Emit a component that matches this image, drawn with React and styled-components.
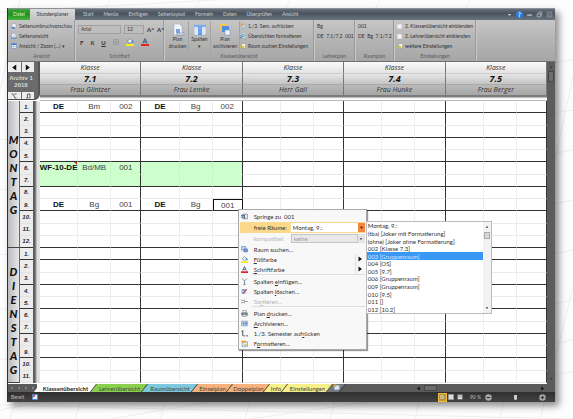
import React from 'react';
import styled, { createGlobalStyle, css } from 'styled-components';

const GlobalStyle = createGlobalStyle`
  * {
    box-sizing: border-box;
  }

  body {
    margin: 0;
    background: #fdfdfd;
    font-family: Lato, 'Open Sans', sans-serif;
    font-size: 5px;
    color: #333;
  }

  button, select, input {
    font: inherit;
    color: inherit;
    margin: 0;
    padding: 0;
    border: 0;
    background: none;
  }
`;

const Page = styled.div`
  position: relative;
  display: flex;
  min-height: 100vh;
  padding: 8px 18px 17px 7px;
`;

const Backdrop = styled.svg`
  position: absolute;
  inset: 0;
  width: 100%;
  height: 100%;
`;

const Window = styled.div`
  position: relative;
  flex: 1;
  min-width: 0;
  display: flex;
  flex-direction: column;
  background: #fff;
  border-left: 1px solid #333;
  box-shadow: 4px 4px 7px rgba(0, 0, 0, 0.45);
`;

const TabBar = styled.nav`
  display: flex;
  height: 12px;
  flex-shrink: 0;
  border-top: 1px solid #8b9299;
  background: linear-gradient(#68717b, #4b555f 40%, #69737e);
  color: #c9ced3;
`;

const RibbonTab = styled.button`
  padding: 0 5px;
  line-height: 11px;
  white-space: nowrap;

  ${({ $kind }) =>
    $kind === 'file' &&
    css`
      width: 22px;
      background: linear-gradient(#3da53b, #219022 50%, #45b53c);
      color: #d9f5d3;
    `}

  ${({ $kind }) =>
    $kind === 'active' &&
    css`
      width: 45px;
      margin-right: 3px;
      padding: 0;
      background: linear-gradient(#dadada, #c3c3c3);
      color: #333;
    `}
`;

const WindowButtons = styled.div`
  display: flex;
  align-items: center;
  gap: 3px;
  margin-left: auto;
  padding-right: 2px;
`;

const WindowButton = styled.button`
  display: flex;
  width: 7px;
  height: 7px;
`;

const Ribbon = styled.div`
  display: flex;
  flex-shrink: 0;
  height: 42px;
  background: linear-gradient(#c6c6c6, #b4b4b4 50%, #a6a6a6);
  border-bottom: 1px solid #707070;
  white-space: nowrap;
`;

const Group = styled.section`
  display: flex;
  flex-direction: column;
  width: ${({ $width }) => $width}px;
  flex-shrink: 0;
  padding: 1px 2px 0 3px;
  border-right: 1px solid #999;
  box-shadow: 1px 0 #c8c8c8;
`;

const GroupBody = styled.div`
  display: flex;
  flex: 1;
`;

const GroupTitle = styled.div`
  height: 9px;
  line-height: 8px;
  text-align: center;
  color: #5a5a5a;
`;

const Stack = styled.div`
  display: flex;
  flex-direction: column;
`;

const Command = styled.button`
  display: flex;
  align-items: center;
  gap: 2px;
  height: 10px;
  white-space: nowrap;
`;

const BigCommand = styled.button`
  display: flex;
  flex-direction: column;
  align-items: center;
  width: ${({ $width }) => $width}px;
  padding-top: 3px;
  border-right: 1px solid #a3a3a3;
  line-height: 7px;
`;

const CheckLabel = styled.label`
  display: flex;
  align-items: center;
  gap: 3px;
  height: 10px;
`;

const CheckBox = styled.input`
  appearance: none;
  width: 5px;
  height: 5px;
  background: #f4f4f4;
  border: 1px solid #ddd;
`;

const FontArea = styled.div`
  flex: 1;
`;

const FontRow = styled.div`
  display: flex;
  align-items: center;
  gap: ${({ $gap }) => $gap}px;
  height: 14px;
  padding-top: ${({ $top }) => $top || 0}px;
  padding-left: ${({ $left }) => $left || 0}px;
`;

const FontSelect = styled.select`
  appearance: none;
  width: ${({ $width }) => $width}px;
  height: 9px;
  padding: 0 2px;
  border: 1px solid #a0a0a0;
  background: #bdbdbd;
  line-height: 7px;
`;

const FormatButton = styled.button`
  display: flex;
  align-items: center;
  font-size: 6px;
  font-weight: 700;
  font-style: ${({ $italic }) => ($italic ? 'italic' : 'normal')};
  text-decoration: ${({ $underline }) => ($underline ? 'underline' : 'none')};
`;

const Workspace = styled.main`
  display: flex;
  flex: 1;
`;

const Schedule = styled.table`
  flex: 1;
  display: grid;
  grid-template-columns: 12px 13px 7px repeat(5, 38fr 33fr 30fr);
  grid-template-rows: 11px 11px 11px 6px repeat(23, minmax(12px, 1fr));
  padding-bottom: 1px;
  font-family: 'Liberation Sans', Arial, sans-serif;
  font-size: 8px;

  thead, tbody, tr {
    display: contents;
  }

  th, td {
    padding: 0;
    min-width: 0;
  }
`;

const Corner = styled.th`
  grid-column: 1 / 4;
  grid-row: 1 / 5;
  margin-bottom: 1px;
  padding-right: 4px !important;
  background: #6b6b6b;
  border-right: 2px solid #565656;
  border-bottom: 1px solid #4a4a4a;
  border-bottom-right-radius: 6px;
  font-family: 'Liberation Sans', Arial, sans-serif;
  font-size: 6px;
  line-height: 7px;
  white-space: nowrap;
  color: #d5d5d5;
  display: flex;
  flex-direction: column;
  justify-content: space-between;
`;

const NavRow = styled.div`
  display: flex;
  gap: 1px;
`;

const NavButton = styled.button`
  flex: 1;
  display: flex;
  align-items: center;
  justify-content: center;
  height: ${({ $small }) => ($small ? 7 : 10)}px;
  background: #ededed;
`;

const HeadCell = styled.th`
  grid-column: span 3;
  border-right: 1px solid #777;
  font-family: 'Open Sans', sans-serif;
  font-style: italic;
  font-size: 7px;
  font-weight: 400;
  line-height: 11px;
  color: #333;
  background: linear-gradient(#fafafa, #e3e3e3);

  ${({ $kind }) =>
    $kind === 'name' &&
    css`
      font-size: 9px;
      font-weight: 700;
      color: #111;
      border-top: 1px solid #ccc;
      line-height: 10px;
      background: linear-gradient(#e6e6e6, #c4c4c4);
    `}

  ${({ $kind }) =>
    $kind === 'teacher' &&
    css`
      border-top: 1px solid #aaa;
      line-height: 10px;
      background: linear-gradient(#bababa, #a6a6a6);
    `}
`;

const HeadEdge = styled.td`
  grid-column: 4 / -1;
  background: linear-gradient(#7c7c7c 40%, #dcdcdc 55%, #fff 75%);
  border-bottom: 1px solid #bbb;
`;

const DayCell = styled.th`
  grid-column: 1;
  grid-row: span ${({ $rows }) => $rows};
  display: flex;
  flex-direction: column;
  align-items: center;
  justify-content: flex-start;
  padding-top: ${({ $top }) => $top}px !important;
  background: linear-gradient(90deg, #b9bcc0, #e6e6e6);
  border-right: 1px solid #666;
  border-bottom: 1px solid #444;
  font-family: Lato, sans-serif;
  font-size: 11px;
  font-weight: 900;
  font-style: italic;
  color: #111;
`;

const DayLetter = styled.span`
  height: 14px;
  line-height: 14px;
`;

const HourCell = styled.th`
  grid-column: 2;
  display: flex;
  align-items: center;
  justify-content: center;
  background: #ececec;
  border-bottom: 1px solid ${({ $line }) => ($line ? '#333' : '#e2e2e2')};
  font-size: 6px;
  font-style: italic;
  color: #222;
`;

const Gutter = styled.td`
  grid-column: 3;
  background: linear-gradient(90deg, #5f5f5f 2px, #a9a9a9 3px, #f3f3f3 5px, #c9c9c9 6px, #fff 7px);
`;

const Cell = styled.td`
  position: relative;
  display: flex;
  align-items: center;
  justify-content: center;
  white-space: nowrap;
  font-weight: ${({ $first }) => ($first ? 700 : 400)};
  color: ${({ $first }) => ($first ? '#111' : '#444')};
  border-right: 1px solid #eee;
  border-bottom: 1px solid ${({ $line }) => ($line ? '#333' : '#e9e9e9')};

  ${({ $green, $line }) =>
    $green &&
    css`
      background: #ccffcc;
      border-right-color: #c4f6c4;
      border-bottom-color: ${$line ? '#333' : '#ccffcc'};
    `}

  ${({ $last }) =>
    $last &&
    css`
      border-right-color: #333;
    `}

  ${({ $note }) =>
    $note &&
    css`
      &:after {
        content: '';
        position: absolute;
        top: 0;
        right: 0;
        border-top: 3px solid #d22;
        border-left: 3px solid transparent;
      }
    `}

  ${({ $selected }) =>
    $selected &&
    css`
      border-top: 1px solid #111;
      border-left: 1px solid #111;
      border-right-color: #111;
    `}
`;

const ScrollTrack = styled.div`
  display: flex;
  flex-direction: column;
  align-items: center;
  width: 8px;
  padding: 3px 0;
  background: #5c5c5c;
`;

const ScrollThumb = styled.div`
  width: 6px;
  height: 11px;
  margin-top: 2px;
  margin-bottom: auto;
  background: #6d6d6d;
  border: 1px solid #454545;
`;

const Menu = styled.div`
  position: absolute;
  z-index: 2;
  top: 9px;
  left: 24px;
  width: 129px;
  padding: 1px;
  background: #f8f8f8;
  border: 1px solid #a9a9a9;
  box-shadow: 1px 1px 1px rgba(0, 0, 0, 0.4);
  font-family: Lato, sans-serif;
  font-size: 6px;
  color: #333;
`;

const MenuItem = styled.div`
  position: relative;
  display: flex;
  align-items: center;
  height: ${({ $tall }) => ($tall ? 11 : 10)}px;
  background: ${({ $active }) => ($active ? '#fbd88a' : 'transparent')};
  color: ${({ $muted }) => ($muted ? '#b5b5b5' : 'inherit')};
`;

const MenuCommand = styled.button`
  display: flex;
  align-items: center;
  width: 100%;
  height: 100%;
`;

const MenuIcon = styled.span`
  display: flex;
  justify-content: center;
  width: 10px;
  margin-right: 4px;
  flex-shrink: 0;
`;

const SubmenuArrow = styled.span`
  display: flex;
  align-items: center;
  justify-content: center;
  width: 10px;
  height: 100%;
  margin-left: auto;
  border-left: 1px solid #ddd;
`;

const Separator = styled.hr`
  height: 1px;
  margin: 0 0 1px 12px;
  border: 0;
  background: #ddd;
`;

const ComboLabel = styled.label`
  width: 37px;
`;

const Combo = styled.select`
  appearance: none;
  flex: 1;
  height: 9px;
  padding: 0 2px;
  background: ${({ disabled }) => (disabled ? '#e8e8e8' : '#fff')};
  border: ${({ disabled }) => (disabled ? '1px solid #c5c5c5' : '0')};
  line-height: ${({ disabled }) => (disabled ? 7 : 9)}px;
  color: ${({ disabled }) => (disabled ? '#999' : '#333')};
  opacity: 1;
`;

const ComboArrow = styled.span`
  display: flex;
  align-items: center;
  justify-content: center;
  width: 7px;
  height: 9px;
  background: ${({ $active }) => ($active ? '#f5853a' : '#e4e4e4')};
`;

const Dropdown = styled.div`
  position: absolute;
  top: -1px;
  left: 126px;
  display: flex;
  width: 126px;
  height: 93px;
  background: #fff;
  border: 1px solid #bbb;
  color: #333;
`;

const OptionList = styled.ul`
  flex: 1;
  display: grid;
  grid-auto-rows: 1fr;
  margin: 0;
  padding: 0;
  list-style: none;
`;

const Option = styled.li`
  display: flex;
  align-items: center;
  padding-left: 1px;
  line-height: 7px;
  background: ${({ $selected }) => ($selected ? '#3a97f3' : 'transparent')};
  color: ${({ $selected }) => ($selected ? '#cfe6ff' : 'inherit')};
`;

const ListScroll = styled.div`
  display: flex;
  flex-direction: column;
  align-items: center;
  width: 8px;
  padding: 3px 0;
  background: #f2f2f2;
`;

const ListThumb = styled.div`
  width: 6px;
  height: 7px;
  margin-top: 3px;
  margin-bottom: auto;
  background: #d6d6d6;
  border: 1px solid #aaa;
`;

const SheetBar = styled.div`
  display: flex;
  flex-shrink: 0;
  height: 8px;
  overflow: hidden;
  background: #5b5b5b;
`;

const SheetNav = styled.div`
  display: flex;
  align-items: center;
  justify-content: space-around;
  width: 29px;
  flex-shrink: 0;
`;

const SheetTab = styled.button`
  position: relative;
  z-index: 0;
  width: ${({ $width }) => $width}px;
  flex-shrink: 0;
  font-size: 6px;
  line-height: 7px;
  white-space: nowrap;
  color: #444;

  &:before {
    content: '';
    position: absolute;
    z-index: -1;
    inset: 0;
    background: ${({ $color }) => $color};
    border-right: 1px solid #333;
    transform: skewX(-38deg);
  }

  ${({ $active }) =>
    $active &&
    css`
      font-weight: 700;
      color: #222;
      text-decoration: underline #c33;
      background: linear-gradient(90deg, #fff 50%, transparent 50%);
    `}
`;

const SheetScroll = styled.div`
  display: flex;
  align-items: center;
  width: 144px;
  margin-left: auto;
  padding-left: 5px;
  padding-right: 10px;
`;

const SheetThumb = styled.div`
  width: 13px;
  height: 6px;
  margin-left: 3px;
  margin-right: auto;
  background: #6c6c6c;
  border: 1px solid #484848;
`;

const StatusBar = styled.footer`
  display: flex;
  align-items: center;
  flex-shrink: 0;
  height: 10px;
  padding: 0 9px 0 3px;
  background: linear-gradient(#2f2f2f, #444);
  color: #bbb;
`;

const StatusIcon = styled.span`
  display: flex;
  margin-left: 8px;
  margin-right: auto;
`;

const ViewButton = styled.button`
  display: flex;
  align-items: center;
  justify-content: center;
  width: 9px;
  height: 9px;
  border: 1px solid ${({ $active }) => ($active ? '#f3bd3c' : 'transparent')};
  background: ${({ $active }) => ($active ? '#c79a38' : 'none')};
`;

const ZoomText = styled.span`
  margin: 0 4px 0 5px;
`;

const RoundButton = styled.button`
  display: flex;
`;

const ZoomSlider = styled.input`
  appearance: none;
  width: 47px;
  height: 8px;

  &::-webkit-slider-thumb {
    appearance: none;
    width: 3px;
    height: 5px;
    background: #ccc;
    border-radius: 0 0 2px 2px;
  }
`;

const Icon = ({ name, size = 6 }) => (
  <svg width={size} height={size} viewBox="0 0 12 12" aria-hidden="true">
    {ICONS[name]}
  </svg>
);

const ICONS = {
  page: (
    <>
      <path d="M2 1h6l2 2v8H2z" fill="#eef3fa" stroke="#8191a8" />
      <path d="M1 8h7v3H1z" fill="#4c83c8" />
    </>
  ),
  preview: (
    <>
      <path d="M1 1h6l3 3v7H1z" fill="#f4f7fb" stroke="#8d99aa" />
      <path d="M3 5h5v2H3z" fill="#9db7d8" />
      <path d="M0 9h11v2H0z" fill="#4179c0" />
    </>
  ),
  grid: (
    <>
      <path d="M1 1h10v10H1z" fill="#e9f1fc" stroke="#4c80c4" />
      <path d="M1 1h10v3H1z" fill="#3c78cb" />
      <path d="M5 4v7M1 7h10" stroke="#85aadb" />
    </>
  ),
  printPage: (
    <>
      <path d="M2 0h6l2 3v8H2z" fill="#f2f6fc" stroke="#a5b0be" strokeWidth=".6" />
      <path d="M4 5h4v4H4z" fill="#7ba3d8" />
      <path d="M5 9h7v2H5z" fill="#dfe8f2" stroke="#6788b3" strokeWidth=".6" />
    </>
  ),
  columns: (
    <>
      <path d="M0 1h12v10H0z" fill="#e6effb" stroke="#8aa8cf" strokeWidth=".6" />
      <path d="M4 1h4v10H4z" fill="#5b9bea" />
      <path d="M0 1h12v2H0zM0 5h12M0 8h12" fill="#6aa3ea" stroke="#b5cbe7" strokeWidth=".5" />
    </>
  ),
  archive: (
    <>
      <path d="M1 0h8v7H1z" fill="#f6c453" />
      <path d="M3 2h7v6H3z" fill="#4b8de2" />
      <path d="M6 6h5v5H6z" fill="#f3f7fd" stroke="#6b98d1" strokeWidth=".6" />
    </>
  ),
  semester: (
    <>
      <path d="M1 1h6v5H1z" fill="#f4a03b" />
      <path d="M4 4h7v7H4z" fill="#dfeaf8" stroke="#6c94c9" />
      <path d="M6 10l3-4" stroke="#d64c2c" />
    </>
  ),
  magnify: (
    <>
      <path d="M2 0h9v10H2z" fill="#eef4fb" stroke="#7aa3ca" />
      <circle cx="6" cy="5" r="3" fill="#9ad0e0" stroke="#20789a" />
      <path d="M4 7l-4 4" stroke="#265e82" strokeWidth="2" />
    </>
  ),
  settings: (
    <>
      <path d="M3 1h8v9H3z" fill="#f5f5ea" stroke="#888" />
      <path d="M0 6h5V4l4 4-4 3V9H0z" fill="#c4c42b" />
    </>
  ),
  borders: <path d="M1 1h10v10H1zM6 1v10M1 6h10" fill="none" stroke="#888" />,
  fill: (
    <>
      <path d="M2 5l4-4 4 4-4 3z" fill="#eef3fa" stroke="#57728f" />
      <path d="M9 4l2 3" stroke="#3c7fd1" strokeWidth="2" />
      <path d="M0 9h12v3H0z" fill="#f8ee10" />
    </>
  ),
  fontColor: (
    <>
      <path d="M3 8l3-7 3 7M4 6h4" fill="none" stroke="#36568b" strokeWidth="1.5" />
      <path d="M0 9h12v3H0z" fill="#e62222" />
    </>
  ),
  jump: (
    <>
      <path d="M3 2h8v8H3z" fill="#e8edf3" stroke="#5c6c80" />
      <path d="M0 4h6M0 7h6M6 3v7" stroke="#3d5a85" strokeWidth="1.5" />
    </>
  ),
  search: (
    <>
      <path d="M1 1h7v6H1z" fill="#c8daf0" stroke="#4a7ab4" />
      <path d="M5 5h6v5H5z" fill="#6e9fdb" stroke="#3c68a0" />
    </>
  ),
  insert: <path d="M2 1l4 4 4-4M6 5v6M4 11h4" fill="none" stroke="#5b6f8d" strokeWidth="1.3" />,
  remove: (
    <>
      <path d="M1 2h9v3H1zM1 6h6v4H1z" fill="#7fa5d8" />
      <path d="M3 10l7-8M4 3l5 5" stroke="#d8412f" strokeWidth="1.6" />
    </>
  ),
  sort: <path d="M0 4h5M0 8h5M6 6h6M6 3v6" stroke="#999" strokeWidth="1.5" />,
  printer: (
    <>
      <path d="M3 1h6v4H3z" fill="#fff" stroke="#777" />
      <path d="M1 5h10v4H1z" fill="#8792a0" stroke="#5d6773" />
      <path d="M3 8h6v3H3z" fill="#eef3fa" stroke="#777" />
    </>
  ),
  box: (
    <>
      <path d="M1 2h10v8H1z" fill="#dbe6f3" stroke="#5f7fa8" />
      <path d="M3 4h3v4H3zM7 4h3v4H7z" fill="#5b8dcc" />
    </>
  ),
  step: <path d="M1 3l2-2v9M4 10h3M9 10h3" fill="none" stroke="#333" strokeWidth="1.5" />,
  format: (
    <>
      <path d="M2 3h9v8H2z" fill="#e6eefa" stroke="#5381bf" />
      <path d="M1 1h7v4H1z" fill="#f0a23c" />
      <path d="M5 7h5v3H5z" fill="#e4c66a" />
    </>
  ),
  left: <path d="M9 1v10L2 6z" fill="#111" />,
  right: <path d="M3 1v10l7-5z" fill="#111" />,
  sheetLeft: <path d="M8 2v8L3 6z" fill="#aaa" />,
  sheetRight: <path d="M4 2v8l5-4z" fill="#aaa" />,
  down: <path d="M2 4h8l-4 5z" fill="#333" />,
  up: <path d="M2 8h8L6 3z" fill="#333" />,
  filter: <path d="M1 2h3l4 8h3M7 2h4" fill="none" stroke="#333" strokeWidth="1.5" />,
  undo: <path d="M2 10h3V2h5v8H7" fill="none" stroke="#333" strokeWidth="1.5" />,
  launcher: <path d="M2 10V2h8M5 5l5 5M10 6v4H6" fill="none" stroke="#777" />,
  chevron: <path d="M3 5h6L6 8z" fill="#ccd2d8" />,
  help: (
    <>
      <circle cx="6" cy="6" r="6" fill="#2f7be0" />
      <path d="M4 4q2-3 4 0q0 1-2 2v2M6 9v1.5" fill="none" stroke="#fff" strokeWidth="1.5" />
    </>
  ),
  minimize: <path d="M2 7h8" stroke="#ccd2d8" strokeWidth="2" />,
  restore: <path d="M2 5h6v5H2zM5 5V2h5v5H8" fill="none" stroke="#b8bec5" strokeWidth="1.3" />,
  close: <path d="M2 2h8v8H2zM4 4l4 4M8 4l-4 4" fill="none" stroke="#a7adb4" />,
  newSheet: (
    <>
      <path d="M2 2h9v8H2z" fill="#dce9f8" stroke="#6f9bd0" />
      <path d="M1 1h5v4H1z" fill="#eba24d" />
    </>
  ),
  macro: (
    <>
      <path d="M1 1h10v10H1z" fill="#e8f1fc" stroke="#4d88cf" strokeWidth="2" />
      <circle cx="4" cy="4" r="2.5" fill="#d95b46" />
    </>
  ),
  viewNormal: <path d="M1 2h10v8H1zM1 6h10M4 2v8M8 2v8" fill="#eee" stroke="#8b6d24" />,
  viewPage: <path d="M1 1h10v10H1z" fill="#ddd" stroke="#999" strokeWidth="2" />,
  viewBreak: <path d="M1 1h10v10H1zM4 1v6M8 1v6" fill="#ddd" stroke="#555" />,
  minus: (
    <>
      <circle cx="6" cy="6" r="5.5" fill="#aaa" />
      <path d="M3 6h6" stroke="#333" strokeWidth="2" />
    </>
  ),
  plus: (
    <>
      <circle cx="6" cy="6" r="5.5" fill="#aaa" />
      <path d="M3 6h6M6 3v6" stroke="#333" strokeWidth="2" />
    </>
  ),
};

const RIBBON_TABS = [
  'Start',
  'Menüs',
  'Einfügen',
  'Seitenlayout',
  'Formeln',
  'Daten',
  'Überprüfen',
  'Ansicht',
];

const CLASSES = [
  { name: '7.1', teacher: 'Frau Glintzer' },
  { name: '7.2', teacher: 'Frau Lemke' },
  { name: '7.3', teacher: 'Herr Gall' },
  { name: '7.4', teacher: 'Frau Hunke' },
  { name: '7.5', teacher: 'Frau Berger' },
];

const DAYS = [
  { name: 'MONTAG', hours: 12, top: 32 },
  { name: 'DIENSTAG', hours: 11, top: 17 },
];

// hours that close a block with a dark line
const BLOCK_ENDS = [1, 3, 5, 7, 9, 12];

const LESSONS = {
  'MONTAG-1': [['DE', 'Bm', '002'], ['DE', 'Bg', '002']],
  'MONTAG-6': [['WF-10-DE', 'Bd/MB', '001']],
  'MONTAG-9': [['DE', 'Bg', '001'], ['DE', 'Bg', '001']],
};

const ROOMS = [
  'Montag, 9.:',
  '(tba) [Joker mit Formatierung]',
  '(ohne) [Joker ohne Formatierung]',
  '002 [Klasse 7.3]',
  '003 [Gruppenraum]',
  '004 [OS]',
  '005 [9.7]',
  '006 [Gruppenraum]',
  '009 [Gruppenraum]',
  '010 [9.5]',
  '011 []',
  '012 [10.2]',
];

const SHEETS = [
  { name: 'Klassenübersicht', color: '#fff', width: 57, active: true },
  { name: 'Lehrerübersicht', color: '#8ad04e', width: 51 },
  { name: 'Raumübersicht', color: '#7cc9dd', width: 50 },
  { name: 'Einzelplan', color: '#f6b27c', width: 35 },
  { name: 'Doppelplan', color: '#f6b27c', width: 37 },
  { name: 'Info', color: '#f5f08a', width: 18 },
  { name: 'Einstellungen', color: '#f5f08a', width: 45 },
];

const RibbonHeader = () => (
  <TabBar>
    <RibbonTab $kind="file">Datei</RibbonTab>
    <RibbonTab $kind="active">Stundenplaner</RibbonTab>
    {RIBBON_TABS.map((tab) => (
      <RibbonTab key={tab}>{tab}</RibbonTab>
    ))}
    <WindowButtons>
      {['chevron', 'help', 'minimize', 'restore', 'close'].map((name) => (
        <WindowButton key={name} aria-label={name}>
          <Icon name={name} size={7} />
        </WindowButton>
      ))}
    </WindowButtons>
  </TabBar>
);

const RibbonBody = () => (
  <Ribbon>
    <Group $width={67}>
      <GroupBody>
        <Stack>
          <Command><Icon name="page" />Seitenumbruchvorschau</Command>
          <Command><Icon name="preview" />Seitenansicht</Command>
          <Command><Icon name="grid" />Ansicht / Zoom (...) ▾</Command>
        </Stack>
      </GroupBody>
      <GroupTitle>Ansicht</GroupTitle>
    </Group>

    <Group $width={89}>
      <GroupBody>
        <FontArea>
          <FontRow $gap={3} $top={3}>
            <FontSelect $width={43} aria-label="Schriftart"><option>Arial</option></FontSelect>
            <FontSelect $width={20} aria-label="Schriftgrad"><option>12</option></FontSelect>
            <FormatButton>A˄</FormatButton>
            <FormatButton>A˅</FormatButton>
          </FontRow>
          <FontRow $gap={7} $left={2}>
            <FormatButton>F</FormatButton>
            <FormatButton $italic>K</FormatButton>
            <FormatButton $underline>U</FormatButton>
            <FormatButton aria-label="Rahmen"><Icon name="borders" /></FormatButton>
            <FormatButton aria-label="Füllfarbe"><Icon name="fill" size={8} /></FormatButton>
            <FormatButton aria-label="Schriftfarbe"><Icon name="fontColor" size={8} /></FormatButton>
          </FontRow>
        </FontArea>
      </GroupBody>
      <GroupTitle>Schriftart</GroupTitle>
    </Group>

    <Group $width={150}>
      <GroupBody>
        <BigCommand $width={22}><Icon name="printPage" size={12} />Plan<br />drucken</BigCommand>
        <BigCommand $width={22}><Icon name="columns" size={12} />Spalten<br />▾</BigCommand>
        <BigCommand $width={29}><Icon name="archive" size={12} />Plan<br />archivieren</BigCommand>
        <Stack>
          <Command><Icon name="semester" />1./3. Sem. aufrücken</Command>
          <Command><Icon name="magnify" />Übersichten formatieren</Command>
          <Command><Icon name="settings" />Raum suchen Einstellungen</Command>
        </Stack>
      </GroupBody>
      <GroupTitle>Klassenübersicht</GroupTitle>
    </Group>

    <Group $width={41}>
      <GroupBody>
        <Stack>
          <Command>Bg</Command>
          <Command>DE&nbsp; 7.1/7.2&nbsp; 001</Command>
        </Stack>
      </GroupBody>
      <GroupTitle>Lehrerplan</GroupTitle>
    </Group>

    <Group $width={39}>
      <GroupBody>
        <Stack>
          <Command>001</Command>
          <Command>DE&nbsp; Bg&nbsp; 7.1/7.2</Command>
        </Stack>
      </GroupBody>
      <GroupTitle>Raumplan</GroupTitle>
    </Group>

    <Group $width={82}>
      <GroupBody>
        <Stack>
          <CheckLabel><CheckBox type="checkbox" />2. Klassenübersicht einblenden</CheckLabel>
          <CheckLabel><CheckBox type="checkbox" />2. Lehrerübersicht einblenden</CheckLabel>
          <Command><Icon name="settings" />weitere Einstellungen</Command>
        </Stack>
      </GroupBody>
      <GroupTitle>Einstellungen</GroupTitle>
    </Group>
  </Ribbon>
);

const MenuEntry = ({ icon, children, tall, muted, submenu }) => (
  <MenuItem $tall={tall} $muted={muted}>
    <MenuCommand disabled={muted}>
      <MenuIcon><Icon name={icon} size={7} /></MenuIcon>
      {children}
      {submenu && <SubmenuArrow><Icon name="right" /></SubmenuArrow>}
    </MenuCommand>
  </MenuItem>
);

const RoomDropdown = () => (
  <Dropdown>
    <OptionList role="listbox" aria-label="freie Räume">
      {ROOMS.map((room) => (
        <Option
          key={room}
          role="option"
          aria-selected={room.startsWith('003')}
          $selected={room.startsWith('003')}
        >
          {room}
        </Option>
      ))}
    </OptionList>
    <ListScroll>
      <Icon name="up" size={4} />
      <ListThumb />
      <Icon name="down" size={4} />
    </ListScroll>
  </Dropdown>
);

const ContextMenu = () => (
  <Menu>
    <MenuEntry icon="jump" tall>Springe zu&nbsp; 001</MenuEntry>
    <MenuItem $tall $active>
      <MenuIcon />
      <ComboLabel htmlFor="rooms">freie Räume:</ComboLabel>
      <Combo id="rooms"><option>Montag, 9.:</option></Combo>
      <ComboArrow $active><Icon name="down" size={5} /></ComboArrow>
      <RoomDropdown />
    </MenuItem>
    <MenuItem $tall $muted>
      <MenuIcon />
      <ComboLabel htmlFor="compatible">kompatibel:</ComboLabel>
      <Combo id="compatible" disabled><option>keine</option></Combo>
      <ComboArrow><Icon name="down" size={4} /></ComboArrow>
    </MenuItem>
    <MenuEntry icon="search">Raum suchen...</MenuEntry>
    <MenuEntry icon="fill" submenu><span><u>F</u>üllfarbe</span></MenuEntry>
    <MenuEntry icon="fontColor" submenu><span><u>S</u>chriftfarbe</span></MenuEntry>
    <Separator />
    <MenuEntry icon="insert"><span>Spalten <u>e</u>infügen...</span></MenuEntry>
    <MenuEntry icon="remove"><span>Spalten <u>l</u>öschen...</span></MenuEntry>
    <MenuEntry icon="sort" muted><span>So<u>r</u>tieren...</span></MenuEntry>
    <Separator />
    <MenuEntry icon="printer"><span>Plan <u>d</u>rucken...</span></MenuEntry>
    <MenuEntry icon="box"><span><u>A</u>rchivieren...</span></MenuEntry>
    <MenuEntry icon="step"><span>1./3. Semester auf<u>r</u>ücken</span></MenuEntry>
    <MenuEntry icon="format"><span>F<u>o</u>rmatieren...</span></MenuEntry>
  </Menu>
);

const HourRow = ({ day, hour }) => {
  const line = BLOCK_ENDS.includes(hour);
  const lessons = LESSONS[`${day.name}-${hour}`] || [];
  const optional = day.name === 'MONTAG' && (hour === 6 || hour === 7);

  return (
    <tr>
      {hour === 1 && (
        <DayCell $rows={day.hours} $top={day.top} rowSpan={day.hours} scope="rowgroup">
          {day.name.split('').map((letter, i) => (
            <DayLetter key={i}>{letter}</DayLetter>
          ))}
        </DayCell>
      )}
      <HourCell $line={line} scope="row">{hour}.</HourCell>
      <Gutter />
      {CLASSES.map((item, c) =>
        [0, 1, 2].map((part) => {
          const selected = day.name === 'MONTAG' && hour === 9 && c === 1 && part === 2;
          return (
            <Cell
              key={`${c}-${part}`}
              $first={part === 0}
              $last={part === 2}
              $line={line}
              $green={optional && c < 2}
              $note={optional && hour === 6 && c === 0 && part === 0}
              $selected={selected}
            >
              {lessons[c] && lessons[c][part]}
              {selected && <ContextMenu />}
            </Cell>
          );
        })
      )}
    </tr>
  );
};

const Timetable = () => (
  <Schedule>
    <thead>
      <tr>
        <Corner rowSpan={4} colSpan={3}>
          <NavRow>
            <NavButton aria-label="Zurück"><Icon name="left" size={7} /></NavButton>
            <NavButton aria-label="Weiter"><Icon name="right" size={7} /></NavButton>
          </NavRow>
          <span>Archiv 1<br />2018</span>
          <NavRow>
            <NavButton $small aria-label="Filter"><Icon name="filter" size={6} /></NavButton>
            <NavButton $small aria-label="Rückgängig"><Icon name="undo" size={6} /></NavButton>
          </NavRow>
        </Corner>
        {CLASSES.map((item) => (
          <HeadCell key={item.name} colSpan={3}>Klasse</HeadCell>
        ))}
      </tr>
      <tr>
        {CLASSES.map((item) => (
          <HeadCell key={item.name} colSpan={3} $kind="name">{item.name}</HeadCell>
        ))}
      </tr>
      <tr>
        {CLASSES.map((item) => (
          <HeadCell key={item.name} colSpan={3} $kind="teacher">{item.teacher}</HeadCell>
        ))}
      </tr>
      <tr>
        <HeadEdge colSpan={15} />
      </tr>
    </thead>
    <tbody>
      {DAYS.map((day) =>
        Array.from({ length: day.hours }, (_, i) => (
          <HourRow key={`${day.name}-${i}`} day={day} hour={i + 1} />
        ))
      )}
    </tbody>
  </Schedule>
);

const App = () => {
  return (
    <>
      <GlobalStyle />
      <Page>
        <Backdrop viewBox="0 0 573 419" preserveAspectRatio="none" aria-hidden="true">
          <path
            d="M0 12L573-20M0 140L573 60M0 190L573 110M0 255L573 150M0 310L573 200M0 360L573 250M0 410L573 300M0 405L573 419M110 419L573 340M250 419L573 372M10 419L50 300M75 419L150 200M160 419L250 150M245 419L330 100M330 419L420 60M415 419L500 40M500 419L585 20M540 419L620 100M20 0L0 90M110 0L90 40M200 0L180 40M290 0L270 40M380 0L360 40M470 0L450 40"
            fill="none"
            stroke="#f0efef"
          />
        </Backdrop>
        <Window>
          <RibbonHeader />
          <RibbonBody />
          <Workspace>
            <Timetable />
            <ScrollTrack>
              <Icon name="up" size={4} />
              <ScrollThumb />
              <Icon name="down" size={4} />
            </ScrollTrack>
          </Workspace>
          <SheetBar>
            <SheetNav>
              <Icon name="sheetLeft" size={4} />
              <Icon name="sheetLeft" size={4} />
              <Icon name="sheetRight" size={4} />
              <Icon name="sheetRight" size={4} />
            </SheetNav>
            {SHEETS.map((sheet) => (
              <SheetTab
                key={sheet.name}
                $color={sheet.color}
                $width={sheet.width}
                $active={sheet.active}
              >
                {sheet.name}
              </SheetTab>
            ))}
            <SheetTab $color="#777" $width={13} aria-label="Neues Blatt">
              <Icon name="newSheet" size={7} />
            </SheetTab>
            <SheetScroll>
              <Icon name="left" size={5} />
              <SheetThumb />
              <Icon name="right" size={5} />
            </SheetScroll>
          </SheetBar>
          <StatusBar>
            Bereit
            <StatusIcon><Icon name="macro" /></StatusIcon>
            <ViewButton $active aria-label="Normal"><Icon name="viewNormal" /></ViewButton>
            <ViewButton aria-label="Seitenlayout"><Icon name="viewPage" /></ViewButton>
            <ViewButton aria-label="Umbruchvorschau"><Icon name="viewBreak" /></ViewButton>
            <ZoomText>90 %</ZoomText>
            <RoundButton aria-label="Verkleinern"><Icon name="minus" size={7} /></RoundButton>
            <ZoomSlider type="range" min="10" max="190" defaultValue="100" aria-label="Zoom" />
            <RoundButton aria-label="Vergrößern"><Icon name="plus" size={7} /></RoundButton>
          </StatusBar>
        </Window>
      </Page>
    </>
  );
};

export default App;
